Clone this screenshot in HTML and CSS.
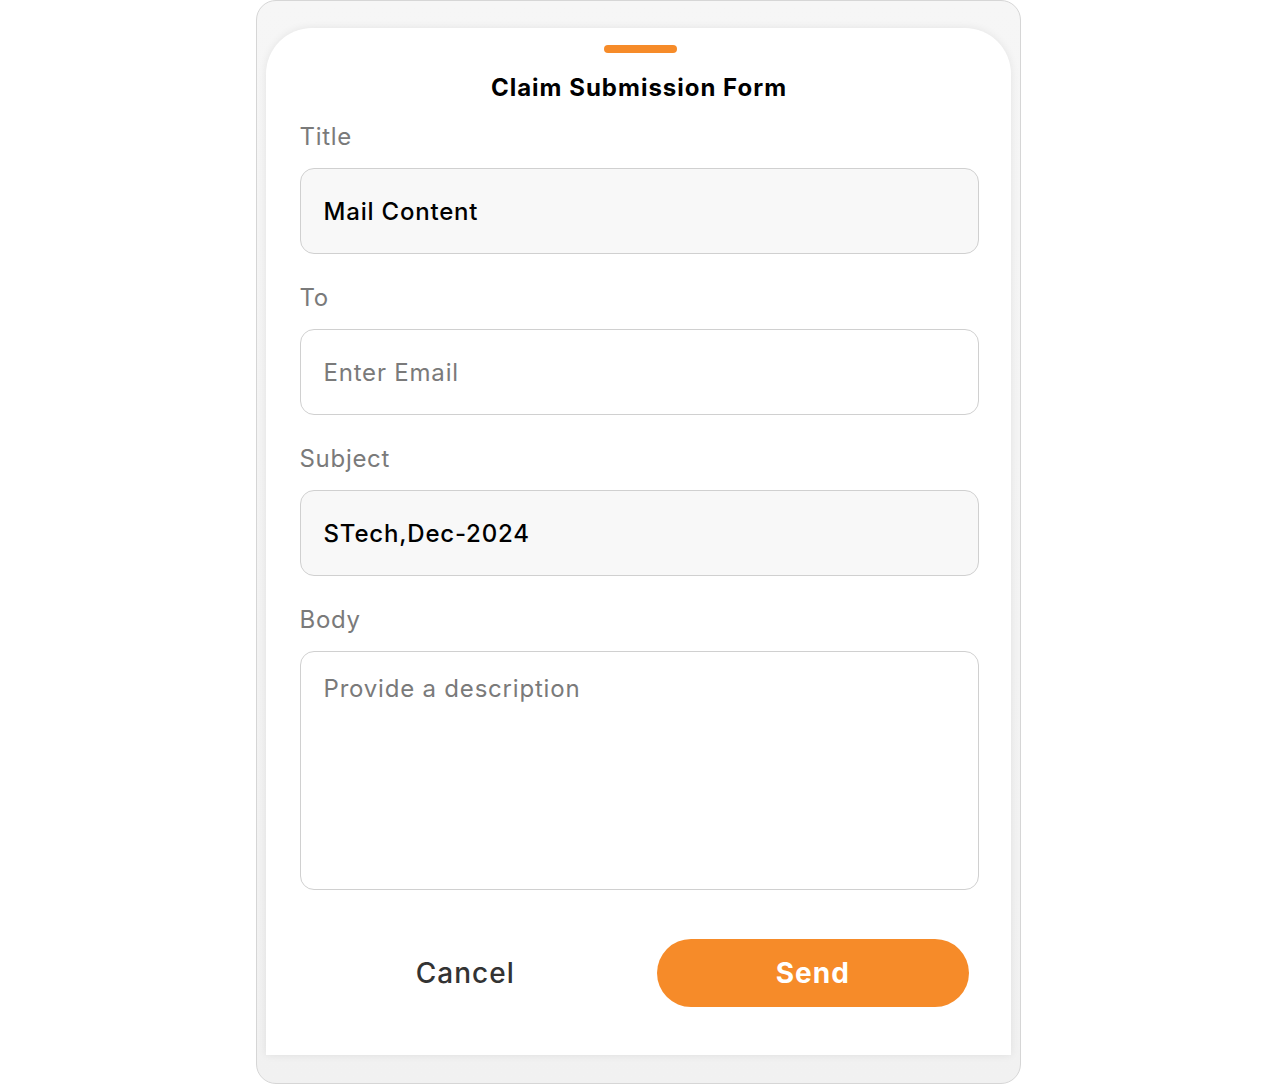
FILE: index.html
```html
<!DOCTYPE html>
<html>
<head>
<meta charset="utf-8">
<link rel="stylesheet" href="styles.css">
</head>
<body>
<div class="frame">
  <div class="card">
    <div class="handle"></div>
    <h1 class="heading">Claim Submission Form</h1>
    <div class="fields">
      <div class="field">
        <div class="label">Title</div>
        <div class="input filled">Mail Content</div>
      </div>
      <div class="field">
        <div class="label">To</div>
        <div class="input placeholder">Enter Email</div>
      </div>
      <div class="field">
        <div class="label">Subject</div>
        <div class="input filled">STech,Dec-2024</div>
      </div>
      <div class="field">
        <div class="label">Body</div>
        <div class="textarea placeholder">Provide a description</div>
      </div>
    </div>
    <div class="actions">
      <button class="btn cancel">Cancel</button>
      <button class="btn send">Send</button>
    </div>
  </div>
</div>
</body>
</html>
```

FILE: styles.css
```css
* { box-sizing: border-box; }
html, body { margin: 0; padding: 0; background: #fff; }
body {
  font-family: "Inter", "Open Sans", sans-serif;
  width: 1276px;
  height: 1084px;
  overflow: hidden;
}
.frame {
  width: 765px;
  height: 1084px;
  margin: 0 auto;
  border: 1px solid #d6d6d6;
  border-radius: 20px;
  background: linear-gradient(#f6f6f6, #f1f1f1);
  padding: 27px 9px 28px 9px;
  display: flex;
  flex-direction: column;
}
.card {
  flex: 1;
  background: #fff;
  border-radius: 46px 46px 0 0;
  box-shadow: 0 0 8px rgba(0,0,0,0.08);
  padding: 17px 32px 48px 34px;
  display: flex;
  flex-direction: column;
}
.handle {
  width: 73px;
  height: 8px;
  border-radius: 4px;
  background: #f68b29;
  align-self: center;
  margin-left: 3px;
}
.heading {
  margin: 20px 0 0;
  font-size: 24px;
  line-height: 30px;
  font-weight: 700;
  letter-spacing: 1px;
  color: #000;
  text-align: center;
}
.fields {
  margin-top: 19px;
  display: flex;
  flex-direction: column;
  gap: 29px;
}
.field { display: flex; flex-direction: column; }
.label {
  font-size: 24px;
  line-height: 30px;
  letter-spacing: 0.7px;
  color: #7a7a7a;
  margin-bottom: 16px;
}
.input, .textarea {
  width: 679px;
  border: 1.5px solid #d0d0d0;
  border-radius: 14px;
  padding: 0 23px;
  font-size: 24px;
  letter-spacing: 0.8px;
  background: #fff;
}
.input {
  height: 86px;
  display: flex;
  align-items: center;
}
.textarea {
  height: 239px;
  padding-top: 22px;
  line-height: 30px;
}
.filled { background: #f8f8f8; color: #000; font-weight: 500; }
.placeholder { color: #7a7a7a; }
.actions {
  margin-top: 49px;
  display: flex;
  gap: 36px;
  padding: 0 10px;
}
.btn {
  flex: 1;
  height: 68px;
  border: none;
  border-radius: 34px;
  font-family: inherit;
  font-size: 28px;
  letter-spacing: 1px;
  cursor: pointer;
}
.cancel { background: transparent; color: #333; font-weight: 500; }
.send { background: #f68b29; color: #fff; font-weight: 700; }
```
